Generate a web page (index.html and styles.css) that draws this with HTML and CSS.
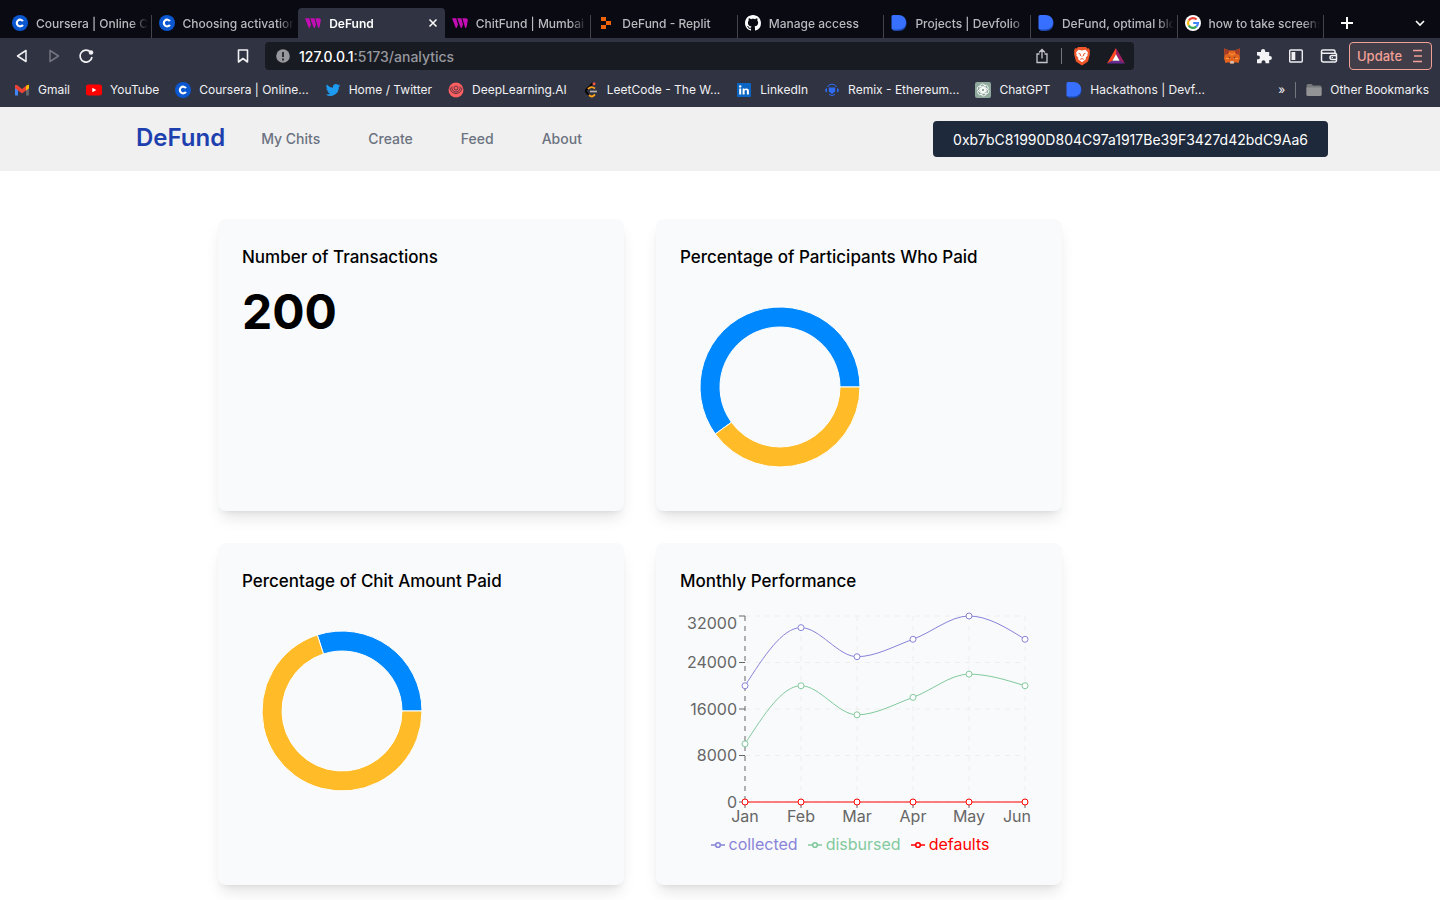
FILE: index.html
```html
<!DOCTYPE html>
<html lang="en">
<head>
<meta charset="utf-8">
<meta name="viewport" content="width=device-width, initial-scale=1">
<title>DeFund</title>
<link rel="stylesheet" href="styles.css">
</head>
<body>
<svg class="defs" aria-hidden="true">
  <symbol id="coursera" viewBox="0 0 16 16"><circle cx="8" cy="8" r="8" fill="#0b57d0"/><path d="M10.900 6.200A3.300 3.300 0 1 0 10.900 9.800" fill="none" stroke="#fff" stroke-width="2.200"/></symbol>
  <symbol id="thirdweb" viewBox="0 0 16 16"><g fill="#c40db4"><path d="M0 3.200h4.200l1.800 6.500-1.400 3.300h-.8z"/><path d="M5.200 3.200h4.200l1.600 6.500-1.400 3.300h-.8z"/><path d="M10.300 3.200h3.300q2.400 0 2.200 2l-1 6-1 1.800h-.6z"/></g></symbol>
  <symbol id="devfolio" viewBox="0 0 16 16"><path d="M2 2h7a6 6 0 0 1 6.600 5.500c0 5-3 8.500-7.600 8.500H3.500Q2 16 1 14z" fill="#1c46a8"/><path d="M.5 1.500Q.5 0 2 0h5.500C12 0 15 3 15 7.300S12 14.500 7.500 14.500H2Q.5 14.500.5 13z" fill="#3770ff"/></symbol>
</svg>

<header class="browser">
  <div class="tabstrip">
    <nav class="tabs" aria-label="Tabs">
      <a class="tab" href="#"><svg class="icon"><use href="#coursera"/></svg><span class="tab-title">Coursera | Online Courses</span></a>
      <a class="tab" href="#"><svg class="icon"><use href="#coursera"/></svg><span class="tab-title">Choosing activation function</span></a>
      <a class="tab tab-active" href="#"><svg class="icon"><use href="#thirdweb"/></svg><span class="tab-title">DeFund</span>
        <svg class="tab-close" viewBox="0 0 10 10"><path d="M1.500 1.500l7 7m0-7l-7 7" stroke="#fff" stroke-width="1.500"/></svg></a>
      <a class="tab" href="#"><svg class="icon"><use href="#thirdweb"/></svg><span class="tab-title">ChitFund | Mumbai Smart</span></a>
      <a class="tab" href="#"><svg class="icon" viewBox="0 0 16 16"><path d="M3 2h5v4H3zM8 6h5v4H8zM3 10h5v4H3z" fill="#f26207"/></svg><span class="tab-title">DeFund - Replit</span></a>
      <a class="tab" href="#"><svg class="icon" viewBox="0 0 16 16"><path fill="#fff" d="M8 0C3.580 0 0 3.580 0 8c0 3.540 2.290 6.530 5.470 7.590.4.070.55-.17.55-.38 0-.19-.01-.82-.01-1.490-2.010.37-2.530-.49-2.690-.94-.09-.23-.48-.94-.82-1.130-.28-.15-.68-.52-.01-.53.63-.01 1.080.58 1.230.82.72 1.210 1.870.87 2.330.66.07-.52.28-.87.51-1.070-1.780-.2-3.640-.89-3.640-3.950 0-.87.31-1.590.82-2.150-.08-.2-.36-1.020.08-2.120 0 0 .67-.21 2.200.82.64-.18 1.320-.27 2-.27s1.360.09 2 .27c1.530-1.040 2.200-.82 2.200-.82.44 1.100.16 1.920.08 2.120.51.56.82 1.270.82 2.150 0 3.070-1.870 3.750-3.650 3.950.29.25.54.73.54 1.480 0 1.070-.01 1.930-.01 2.200 0 .21.15.46.55.38A8.010 8.010 0 0 0 16 8c0-4.420-3.580-8-8-8z"/></svg><span class="tab-title">Manage access</span></a>
      <a class="tab" href="#"><svg class="icon"><use href="#devfolio"/></svg><span class="tab-title">Projects | Devfolio</span></a>
      <a class="tab" href="#"><svg class="icon"><use href="#devfolio"/></svg><span class="tab-title">DeFund, optimal blockchain</span></a>
      <a class="tab" href="#"><svg class="icon" viewBox="0 0 16 16"><circle cx="8" cy="8" r="8" fill="#fff"/><g fill="none" stroke-width="2.200"><path d="M11.600 4.600A5 5 0 0 0 3.700 5.500" stroke="#ea4335"/><path d="M3.700 5.500a5 5 0 0 0 0 5" stroke="#fbbc05"/><path d="M3.700 10.500a5 5 0 0 0 7.600 1.200" stroke="#34a853"/><path d="M11.300 11.700A5 5 0 0 0 13 8H8.200" stroke="#4285f4"/></g></svg><span class="tab-title">how to take screenshots</span></a>
    </nav>
    <div class="tab-actions">
      <button class="icon-button" aria-label="New tab"><svg width="12" height="12" viewBox="0 0 12 12"><path d="M6 0v12M0 6h12" stroke="#fff" stroke-width="2"/></svg></button>
      <button class="icon-button" aria-label="Search tabs"><svg width="12" height="8" viewBox="0 0 12 8"><path d="M2 2l4 4 4-4" fill="none" stroke="#fff" stroke-width="1.600"/></svg></button>
    </div>
  </div>

  <div class="toolbar">
    <div class="nav-buttons">
      <button class="icon-button" aria-label="Back"><svg width="16" height="16" viewBox="0 0 16 16"><path d="M12 2.500v11L3.500 8z" fill="none" stroke="#f0f0f3" stroke-width="1.500" stroke-linejoin="round"/></svg></button>
      <button class="icon-button" aria-label="Forward"><svg width="16" height="16" viewBox="0 0 16 16"><path d="M4 2.500v11L12.500 8z" fill="none" stroke="#72747f" stroke-width="1.500" stroke-linejoin="round"/></svg></button>
      <button class="icon-button" aria-label="Reload"><svg width="16" height="16" viewBox="0 0 16 16"><path d="M12.500 4A6 6 0 1 0 14 9" fill="none" stroke="#f0f0f3" stroke-width="1.700"/><circle cx="13" cy="4.500" r="2.300" fill="#f0f0f3"/></svg></button>
      <button class="icon-button bookmark-page" aria-label="Bookmark this page"><svg width="16" height="16" viewBox="0 0 16 16"><path d="M3.500 2h9v12L8 10.500 3.500 14z" fill="none" stroke="#f0f0f3" stroke-width="1.600" stroke-linejoin="round"/></svg></button>
    </div>
    <div class="address">
      <svg width="14" height="14" viewBox="0 0 14 14"><circle cx="7" cy="7" r="6.800" fill="#97989d"/><path d="M7 3v5M7 9.500v2" stroke="#1a1c24" stroke-width="1.700"/></svg>
      <div class="url"><span class="url-host">127.0.0.1</span>:5173/analytics</div>
      <div class="address-actions">
        <button class="icon-button" aria-label="Share"><svg width="16" height="16" viewBox="0 0 16 16"><path d="M5.500 6H3v8.500h10V6h-2.500M8 10.500V2M5 4.500l3-3 3 3" fill="none" stroke="#c4c5c9" stroke-width="1.300"/></svg></button>
        <span class="rule"></span>
        <button class="icon-button" aria-label="Brave Shields"><svg width="18" height="20" viewBox="0 0 18 20"><path d="M5 1h8l1.200 1.400 1.700-.1 1.100 2.500-.4 1.500.4 1.500-2 7.700L9 19.600 3 15.500 1 7.800l.4-1.500L1 4.800l1.100-2.500 1.700.1z" fill="#f1562b"/><path d="M5.500 3.800L9 4.500l3.500-.7L15 6.500l-.6 1.600.2 1.500-1.900 2.200.2 1.400L9 16.200l-3.900-3 .2-1.400-1.900-2.200.2-1.500L3 6.500z" fill="#fff"/><path d="M5.500 7.300l2 .8-.4 1.200 1.400.9M12.500 7.300l-2 .8.4 1.200-1.400.9M7.200 13.300L9 12.600l1.800.7" fill="none" stroke="#f1562b"/></svg></button>
        <button class="icon-button rewards" aria-label="Brave Rewards"><svg width="18" height="16" viewBox="0 0 18 16"><path d="M9 0L0 15.500l5.500-2.800L9 6.500z" fill="#ff4724"/><path d="M9 0l9 15.500-5.500-2.800L9 6.500z" fill="#9e1f63"/><path d="M0 15.500h18l-5.500-2.800h-7z" fill="#662d91"/><path d="M9 6.300l3.600 6.400H5.400z" fill="#fff"/></svg></button>
      </div>
    </div>
    <div class="toolbar-end">
      <div class="extensions">
        <button class="icon-button" aria-label="MetaMask"><svg width="16" height="16" viewBox="0 0 16 16"><path d="M0 .5l5.500 2h5L16 .5l-.5 6.500.5 3.500-1.500 4.500-3.500-.8L9.500 15.500h-3L5 14.200l-3.500.8L0 10.500.5 7z" fill="#e2641f"/><path d="M0 .5l5.500 2L4 6 .8 6.800zM16 .5l-5.500 2L12 6l3.200.8z" fill="#a63c27"/><path d="M6.300 13h3.400l.3 2.500H6z" fill="#d7c1b3"/><path d="M4.200 8.500l2 .7-.2 1zm7.600 0l-2 .7.200 1z" fill="#35252a"/><path d="M5 5l3 2 3-2M2 10.500h3m6 0h3" fill="none" stroke="#ff9d3c"/></svg></button>
        <button class="icon-button" aria-label="Extensions"><svg width="16" height="16" viewBox="0 0 16 16"><path d="M1 4h4V3a2.100 2.100 0 0 1 4.200 0v1h4v4h.7a2 2 0 0 1 0 4h-.7v3.300H9.500v-1a2 2 0 0 0-4 0v1H1v-4h1a1.900 1.900 0 0 0 0-3.800H1z" fill="#f4f4f6"/></svg></button>
        <button class="icon-button" aria-label="Sidebar"><svg width="16" height="16" viewBox="0 0 16 16"><rect x="1.700" y="2" width="12.600" height="12" rx="1" fill="none" stroke="#f0f0f3" stroke-width="1.400"/><path d="M3.500 4h3.800v8H3.500z" fill="#f0f0f3"/></svg></button>
        <button class="icon-button" aria-label="Wallet"><svg width="18" height="16" viewBox="0 0 18 16"><path d="M15 5V3.500A1.500 1.500 0 0 0 13.500 2H3a1.600 1.600 0 0 0 0 3.200h12A1.500 1.500 0 0 1 16.500 7v5.500A1.500 1.500 0 0 1 15 14H3.500a2 2 0 0 1-2-2V3.500M16.500 7.500H12a2 2 0 0 0 0 4h4.500z" fill="none" stroke="#f0f0f3" stroke-width="1.500"/><circle cx="12.300" cy="9.500" r=".8" fill="#f0f0f3"/></svg></button>
      </div>
      <button class="update">Update<svg width="10" height="14" viewBox="0 0 10 14"><path d="M0 1.500h9M1 7h8M0 12.500h9" stroke="#f2a096" stroke-width="1.300"/></svg></button>
    </div>
  </div>

  <nav class="bookmarks" aria-label="Bookmarks">
    <a class="bookmark" href="#"><svg class="icon" viewBox="0 0 16 16"><path d="M1 5v8.500h3V7z" fill="#4285f4"/><path d="M15 5v8.500h-3V7z" fill="#62646b"/><path d="M1 3v3.200l7 5.200 7-5.200V3h-2L8 7 3 3z" fill="#ea4335"/><path d="M12 4l3-1.500v3.700L12 8.500z" fill="#fbbc04"/></svg>Gmail</a>
    <a class="bookmark" href="#"><svg class="icon" viewBox="0 0 16 16"><rect y="2.500" width="16" height="11" rx="2.500" fill="#f00"/><path d="M6.300 5.700v4.600l4-2.300z" fill="#fff"/></svg>YouTube</a>
    <a class="bookmark" href="#"><svg class="icon"><use href="#coursera"/></svg>Coursera | Online...</a>
    <a class="bookmark" href="#"><svg class="icon" viewBox="0 0 24 24"><path d="M23 5.100a9 9 0 0 1-2.500.7 4.400 4.400 0 0 0 1.900-2.500 9 9 0 0 1-2.800 1.100 4.500 4.500 0 0 0-7.700 4.100A12.700 12.700 0 0 1 2.700 3.900a4.500 4.500 0 0 0 1.400 6 4.400 4.400 0 0 1-2-.6c0 2.200 1.400 4 3.500 4.500a4.500 4.500 0 0 1-2 .1 4.500 4.500 0 0 0 4.200 3.100A9 9 0 0 1 1 18.800 12.700 12.700 0 0 0 20.700 7.500 9 9 0 0 0 23 5.100z" fill="#1d9bf0"/></svg>Home / Twitter</a>
    <a class="bookmark" href="#"><svg class="icon" viewBox="0 0 16 16"><circle cx="8" cy="8" r="7.500" fill="#fd5f61"/><g fill="none" stroke="#3a2a3a" stroke-width=".8"><path d="M2 5.500a6 6 0 0 0 12 0"/><path d="M4 4.500a4.200 4.200 0 1 0 8 0"/><circle cx="8" cy="6" r="2"/></g></svg>DeepLearning.AI</a>
    <a class="bookmark" href="#"><svg class="icon" viewBox="0 0 16 16"><path d="M10 1L3.500 7.500q-1.500 1.500 0 3L6 13" fill="none" stroke="#080808" stroke-width="1.900"/><path d="M6 13q2.500 2.500 4.500.8l1.500-1.500M5 7q3-3.500 7-.5" fill="none" stroke="#ffa116" stroke-width="1.800"/><path d="M7 9.500h7" stroke="#b3b3b3" stroke-width="1.700"/><circle cx="11" cy="1.800" r="1.500" fill="#f1564a"/></svg>LeetCode - The W...</a>
    <a class="bookmark" href="#"><svg class="icon" viewBox="0 0 16 16"><rect x="1" y="1" width="14" height="14" rx="1" fill="#0a66c2"/><path d="M3.200 6.500h2v6h-2zM6.600 6.500h1.900v.9c.8-1.500 4.400-1.600 4.400 1.500v3.600h-2V9.300c0-1.700-2.300-1.500-2.300 0v3.200h-2z" fill="#fff"/><circle cx="4.200" cy="4.400" r="1.200" fill="#fff"/></svg>LinkedIn</a>
    <a class="bookmark" href="#"><svg class="icon" viewBox="0 0 16 16"><path d="M3.500 5a5 5 0 0 1 9 0M5 12.500q3 2 6 0" fill="none" stroke="#2f6df5" stroke-width="1"/><path d="M4.800 5.500h6.400v4L8 12 4.800 9.500z" fill="#2f6df5"/><path d="M3 6v4.500Q1 9.500 1 8.200T3 6m10 0v4.500q2-1 2-2.300T13 6" fill="#2f6df5"/></svg>Remix - Ethereum...</a>
    <a class="bookmark" href="#"><svg class="icon" viewBox="0 0 16 16"><rect width="16" height="16" rx="2" fill="#8fa99d"/><g fill="none" stroke="#fff" stroke-width=".8"><rect x="5" y="2" width="5" height="8" rx="2.500"/><rect x="5" y="2" width="5" height="8" rx="2.500" transform="rotate(60 8 8)"/><rect x="5" y="2" width="5" height="8" rx="2.500" transform="rotate(120 8 8)"/><rect x="5" y="2" width="5" height="8" rx="2.500" transform="rotate(180 8 8)"/><rect x="5" y="2" width="5" height="8" rx="2.500" transform="rotate(240 8 8)"/><rect x="5" y="2" width="5" height="8" rx="2.500" transform="rotate(300 8 8)"/></g></svg>ChatGPT</a>
    <a class="bookmark" href="#"><svg class="icon"><use href="#devfolio"/></svg>Hackathons | Devf...</a>
    <div class="bookmarks-end">
      <button class="icon-button" aria-label="More bookmarks">»</button>
      <span class="rule"></span>
      <a class="bookmark" href="#"><svg class="icon" viewBox="0 0 16 16"><path d="M.5 3.500q0-1.500 1.500-1.500h3.500L7 3.500h7q1.500 0 1.500 1.500v7.500Q15.500 14 14 14H2Q.5 14 .5 12.500z" fill="#77787b"/><path d="M.5 5.500h15v7Q15.500 14 14 14H2Q.5 14 .5 12.500z" fill="#929395"/></svg>Other Bookmarks</a>
    </div>
  </nav>
</header>

<div class="site-nav">
  <div class="site-nav-inner">
    <a class="brand" href="#">DeFund</a>
    <nav class="links">
      <a href="#">My Chits</a>
      <a href="#">Create</a>
      <a href="#">Feed</a>
      <a href="#">About</a>
    </nav>
    <button class="wallet">0xb7bC81990D804C97a1917Be39F3427d42bdC9Aa6</button>
  </div>
</div>

<main class="dashboard">
  <section class="card">
    <h2>Number of Transactions</h2>
    <p class="total">200</p>
  </section>
  <section class="card">
    <h2>Percentage of Participants Who Paid</h2>
    <svg class="chart" width="200" height="200" viewBox="0 0 200 200" role="img" aria-label="60% paid">
      <g stroke="#fff" stroke-width="1">
        <path d="M180 100A80 80 0 1 0 35.280 147.020L51.460 135.270A60 60 0 1 1 160 100z" fill="#0088fe"/>
        <path d="M35.280 147.020A80 80 0 0 0 180 100H160A60 60 0 0 1 51.460 135.270z" fill="#ffbb28"/>
      </g>
    </svg>
  </section>
  <section class="card">
    <h2>Percentage of Chit Amount Paid</h2>
    <svg class="chart" width="200" height="200" viewBox="0 0 200 200" role="img" aria-label="30% paid">
      <g stroke="#fff" stroke-width="1">
        <path d="M180 100A80 80 0 0 0 75.280 23.920L81.460 42.940A60 60 0 0 1 160 100z" fill="#0088fe"/>
        <path d="M75.280 23.920A80 80 0 1 0 180 100H160A60 60 0 1 1 81.460 42.940z" fill="#ffbb28"/>
      </g>
    </svg>
  </section>
  <section class="card">
    <h2>Monthly Performance</h2>
    <div class="performance">
      <svg class="chart" width="350" height="221" viewBox="0 0 350 221" role="img" aria-label="Collected, disbursed and defaulted amounts by month">
        <path class="grid" d="M65 5H345M65 51.500H345M65 98H345M65 144.500H345M65 191H345M121 5V191M177 5V191M233 5V191M289 5V191M345 5V191"/>
        <path class="axis-dashed" d="M65 5V191"/>
        <path class="ticks" d="M59 5h6M59 51.500h6M59 98h6M59 144.500h6M59 191h6M65 191v6M121 191v6M177 191v6M233 191v6M289 191v6M345 191v6"/>
        <g class="labels-y">
          <text x="57" y="18">32000</text><text x="57" y="57">24000</text><text x="57" y="104">16000</text><text x="57" y="150">8000</text><text x="57" y="197">0</text>
        </g>
        <g class="labels-x">
          <text x="65" y="211">Jan</text><text x="121" y="211">Feb</text><text x="177" y="211">Mar</text><text x="233" y="211">Apr</text><text x="289" y="211">May</text><text x="337" y="211">Jun</text>
        </g>
        <g class="series collected">
          <path d="M65 74.750C83.670 45.680 102.330 16.630 121 16.630S158.330 45.690 177 45.690S214.330 35.030 233 28.250S270.330 5 289 5S326.330 16.620 345 28.250"/>
          <circle cx="65" cy="74.750" r="3"/><circle cx="121" cy="16.630" r="3"/><circle cx="177" cy="45.690" r="3"/><circle cx="233" cy="28.250" r="3"/><circle cx="289" cy="5" r="3"/><circle cx="345" cy="28.250" r="3"/>
        </g>
        <g class="series disbursed">
          <path d="M65 132.880C83.670 103.810 102.330 74.750 121 74.750S158.330 103.810 177 103.810S214.330 93.160 233 86.380S270.330 63.130 289 63.130S326.330 68.940 345 74.750"/>
          <circle cx="65" cy="132.880" r="3"/><circle cx="121" cy="74.750" r="3"/><circle cx="177" cy="103.810" r="3"/><circle cx="233" cy="86.380" r="3"/><circle cx="289" cy="63.130" r="3"/><circle cx="345" cy="74.750" r="3"/>
        </g>
        <g class="series defaults">
          <path d="M65 191H345"/>
          <circle cx="65" cy="191" r="3"/><circle cx="121" cy="191" r="3"/><circle cx="177" cy="191" r="3"/><circle cx="233" cy="191" r="3"/><circle cx="289" cy="191" r="3"/><circle cx="345" cy="191" r="3"/>
        </g>
      </svg>
      <ul class="legend">
        <li class="collected"><svg width="14" height="14" viewBox="0 0 14 14"><path d="M0 8h4.700M9.300 8H14"/><circle cx="7" cy="8" r="2.300"/></svg>collected</li>
        <li class="disbursed"><svg width="14" height="14" viewBox="0 0 14 14"><path d="M0 8h4.700M9.300 8H14"/><circle cx="7" cy="8" r="2.300"/></svg>disbursed</li>
        <li class="defaults"><svg width="14" height="14" viewBox="0 0 14 14"><path d="M0 8h4.700M9.300 8H14"/><circle cx="7" cy="8" r="2.300"/></svg>defaults</li>
      </ul>
    </div>
  </section>
</main>
</body>
</html>
```
FILE: styles.css
```css
* { box-sizing: border-box; }
body {
  min-height: 100vh;
  margin: 0;
  background: #fff;
  color: #000;
  font-family: Inter, "Liberation Sans", sans-serif;
}
a { color: inherit; text-decoration: none; }
button { font: inherit; color: inherit; cursor: pointer; }
svg { display: block; flex: none; }
.defs { position: absolute; width: 0; height: 0; }
.icon { width: 16px; height: 16px; }
.icon-button {
  display: flex;
  align-items: center;
  justify-content: center;
  padding: 0;
  border: 0;
  background: none;
}

/* Browser window */
.browser {
  background: #303341;
  color: #f1f1f4;
  font-size: 12px;
  font-weight: 500;
}
.tabstrip {
  display: flex;
  height: 38px;
  padding: 8px 14px 0 5px;
  background: #0a0a13;
}
.tabs { display: flex; flex: 1; min-width: 0; }
.tab {
  display: flex;
  flex: 1 1 0;
  align-items: center;
  gap: 8px;
  min-width: 0;
  padding: 0 4px 0 7px;
  color: #b9b9be;
  background: linear-gradient(#44454c, #44454c) right bottom / 1px 23px no-repeat;
}
.tab:nth-child(2) { background: none; }
.tab-title {
  flex: 1;
  overflow: hidden;
  white-space: nowrap;
  mask-image: linear-gradient(to right, #000 85%, transparent);
}
.tab-active,
.tab-active:nth-child(3) {
  background: #303341;
  border-radius: 4px 4px 0 0;
  color: #fff;
  font-weight: 600;
}
.tab-close { width: 10px; height: 10px; margin-right: 3px; }
.tab-actions {
  display: flex;
  align-items: center;
  justify-content: space-between;
  width: 102px;
  padding-left: 17px;
}

.toolbar {
  display: flex;
  align-items: center;
  height: 36px;
  padding: 0 8px 0 14px;
}
.nav-buttons { display: flex; gap: 16px; width: 251px; padding-right: 14px; }
.bookmark-page { margin-left: auto; }
.address {
  display: flex;
  flex: 1;
  align-items: center;
  gap: 9px;
  height: 28px;
  padding: 0 9px 0 11px;
  background: #191b23;
  border-radius: 4px;
}
.url { flex: 1; color: #96989e; font-size: 14px; }
.url-host { color: #fff; }
.address-actions { display: flex; align-items: center; gap: 11px; }
.rewards { margin-left: 5px; }
.rule { width: 1px; height: 16px; background: #73757f; }
.toolbar-end {
  display: flex;
  align-items: center;
  justify-content: flex-end;
  gap: 11px;
  width: 298px;
}
.extensions { display: flex; align-items: center; gap: 16px; }
.update {
  display: flex;
  align-items: center;
  justify-content: space-between;
  width: 83px;
  height: 28px;
  padding: 0 8px 0 7px;
  border: 1px solid #f2a096;
  border-radius: 4px;
  background: #413e4a;
  color: #f2a096;
  font-size: 13px;
}

.bookmarks {
  display: flex;
  align-items: center;
  gap: 16px;
  height: 33px;
  padding: 0 11px 2px 14px;
  font-weight: 400;
  white-space: nowrap;
}
.bookmark { display: flex; align-items: center; gap: 8px; }
.bookmarks-end {
  display: flex;
  align-items: center;
  gap: 10px;
  margin-left: auto;
}

/* Site navigation */
.site-nav { padding: 0 112px; background: #f0f0f0; }
.site-nav-inner {
  display: flex;
  align-items: center;
  height: 64px;
  padding: 0 0 2px 24px;
}
.brand { color: #1e40af; font-size: 24px; font-weight: 600; line-height: 32px; }
.links {
  display: flex;
  gap: 48px;
  margin-left: 36px;
  color: #6b7280;
  font-size: 14px;
  font-weight: 500;
}
.wallet {
  height: 36px;
  margin: 2px 0 0 auto;
  padding: 0 20px;
  border: 0;
  border-radius: 4px;
  background: #1e293b;
  color: #fff;
  font-size: 14px;
  font-weight: 400;
}

/* Dashboard */
.dashboard {
  display: grid;
  grid-template-columns: 1fr 1fr;
  gap: 32px;
  max-width: 1004px;
  margin: 0 auto;
  padding: 48px 160px 15px 0;
}
.card {
  padding: 24px;
  border-radius: 8px;
  background: #f9fafc;
  box-shadow: 0 10px 15px -3px rgb(0 0 0 / 10%), 0 4px 6px -4px rgb(0 0 0 / 10%);
}
.card h2 { margin: 0 0 16px; font-size: 17px; font-weight: 500; line-height: 28px; }
.total { margin: 0; font-size: 48px; font-weight: 700; line-height: 50px; }

.performance { width: 350px; }
.chart { overflow: visible; }
.grid { fill: none; stroke: #eeeeef; stroke-dasharray: 5 5; }
.axis-dashed { stroke: #666; stroke-dasharray: 5 5; }
.ticks { stroke: #666; }
.labels-y, .labels-x { fill: #666; font-size: 16px; }
.labels-y { text-anchor: end; }
.labels-x { text-anchor: middle; }
.collected { color: #8884d8; }
.disbursed { color: #82ca9d; }
.defaults { color: #f00; }
.series { fill: none; stroke: currentColor; }
.series circle { fill: #fff; }
.legend {
  display: flex;
  justify-content: center;
  gap: 10px;
  margin: 0;
  padding: 0 10px 5px 0;
  list-style: none;
  font-size: 16px;
  line-height: 24px;
}
.legend li { display: flex; align-items: center; gap: 4px; }
.legend svg { fill: none; stroke: currentColor; stroke-width: 1.600; }
```
